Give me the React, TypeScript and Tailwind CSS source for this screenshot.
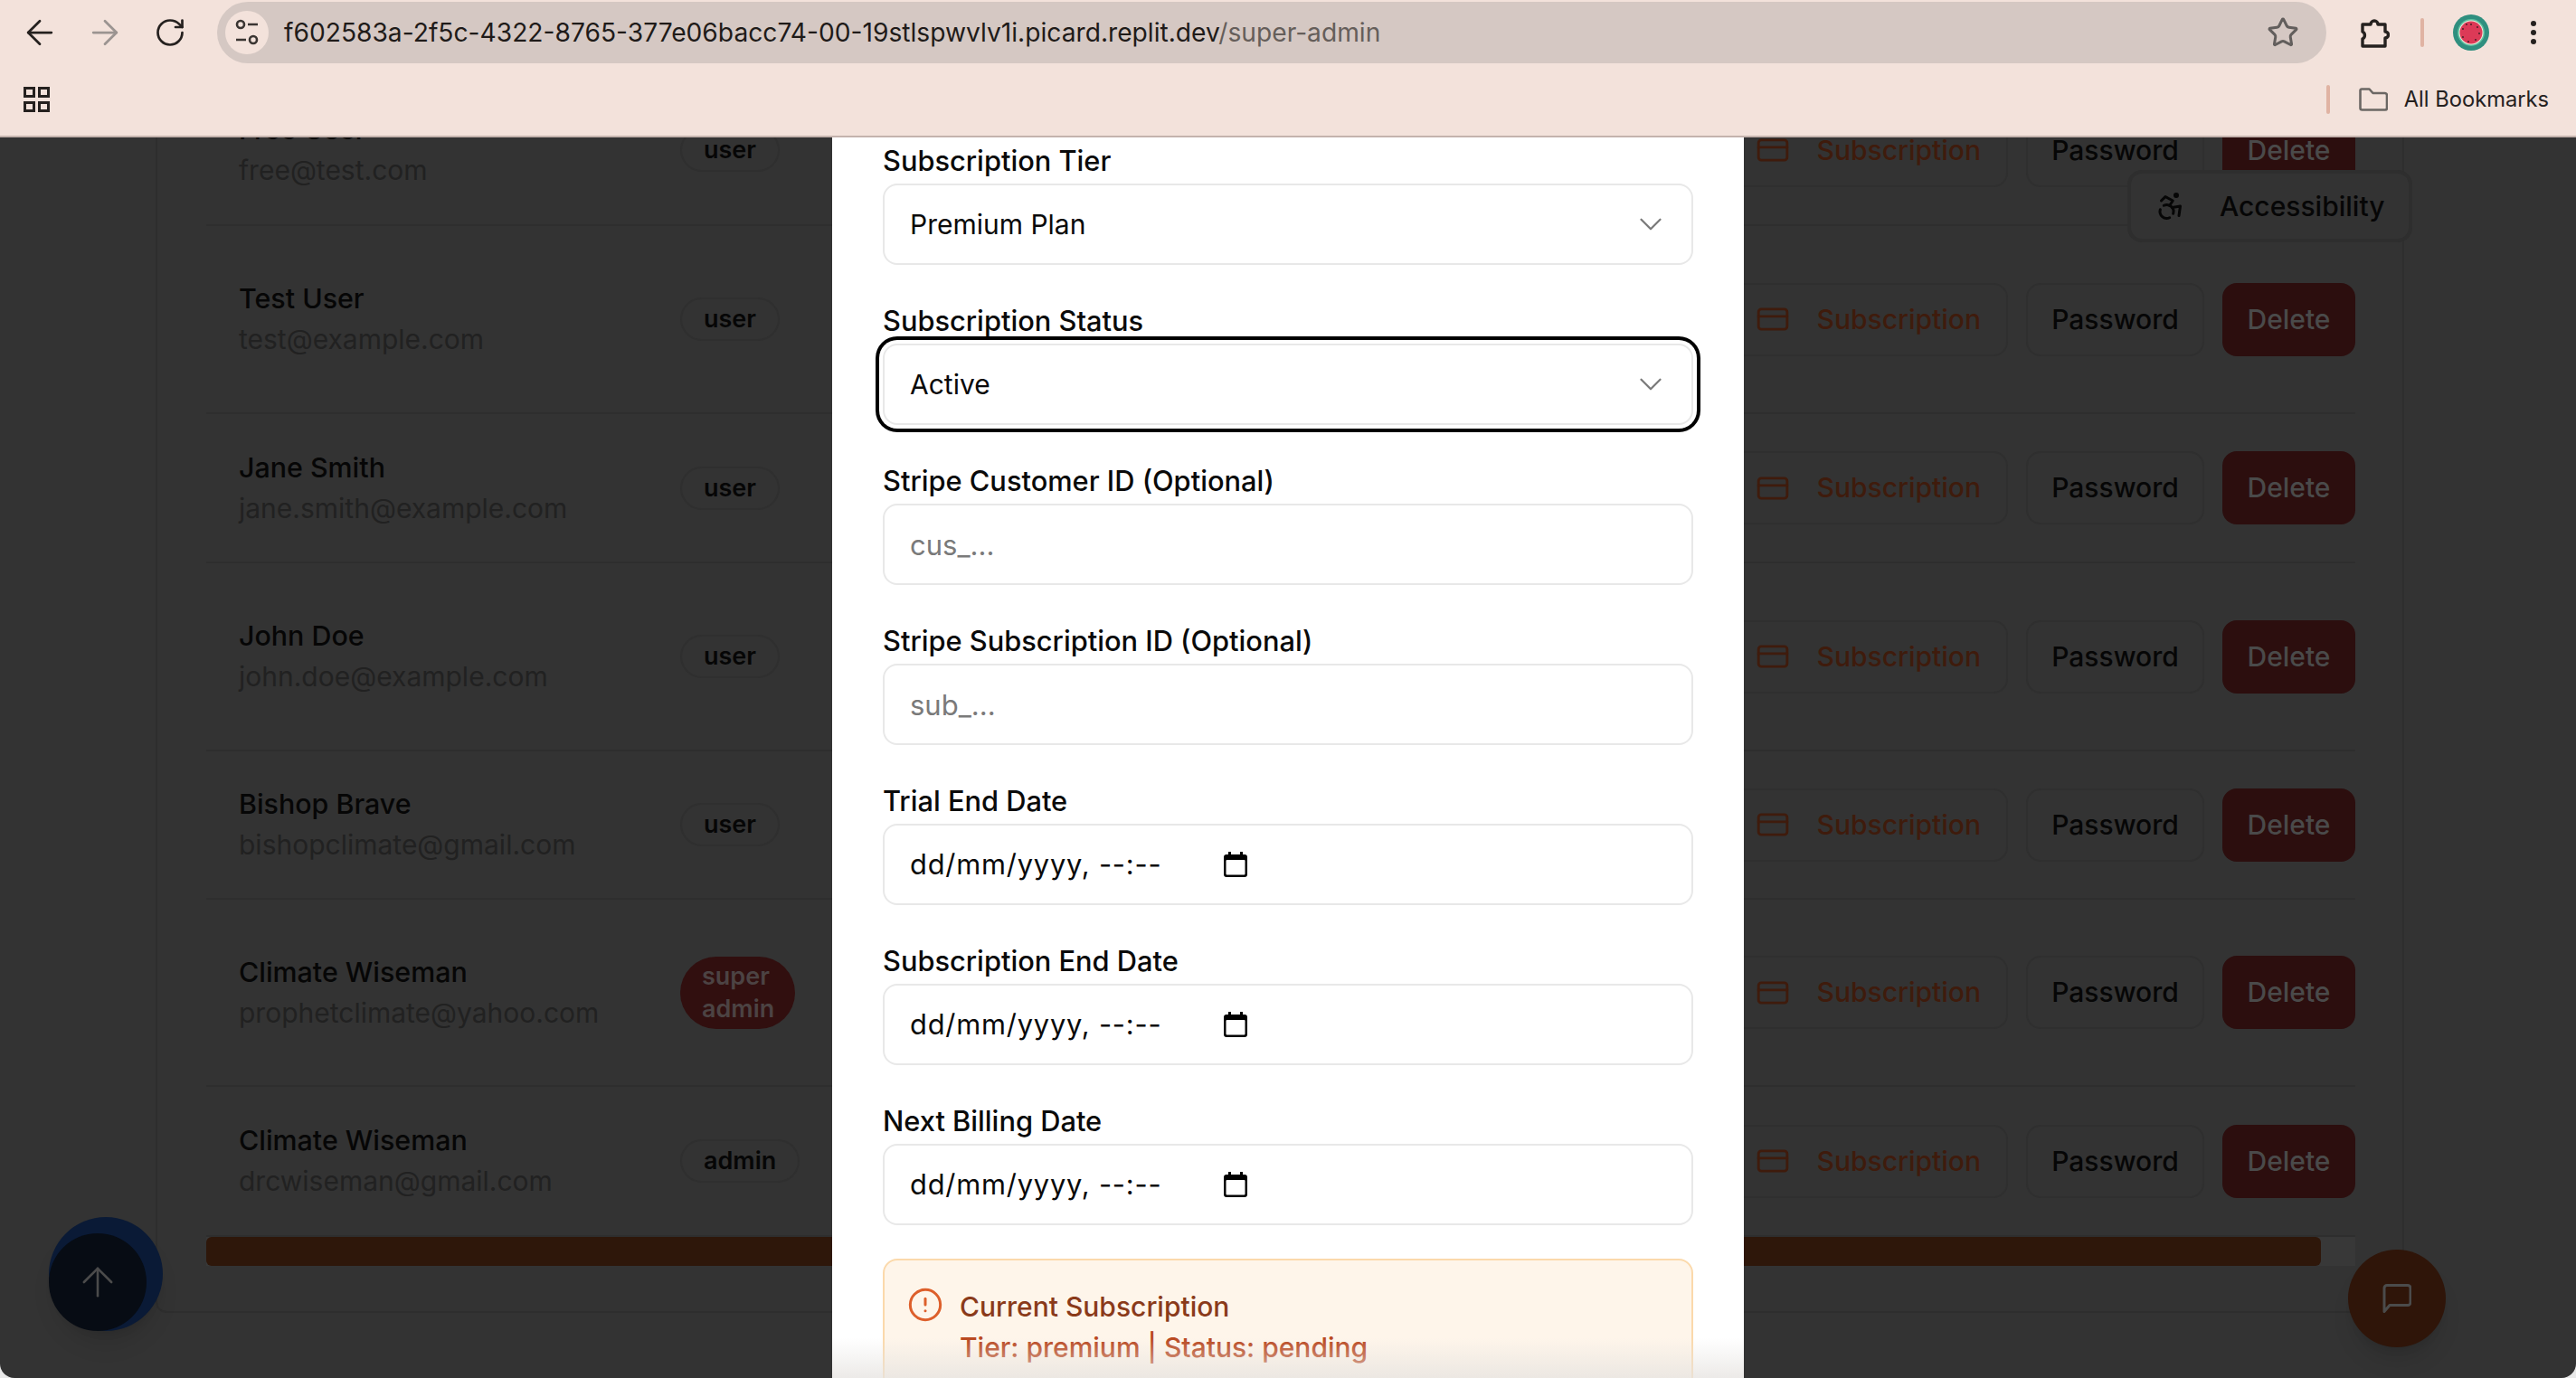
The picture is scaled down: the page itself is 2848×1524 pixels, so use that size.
import { Accessibility, ArrowLeft, ArrowRight, ArrowUp, ChevronDown, CircleAlert, CreditCard, RotateCw, Star } from 'lucide-react'

const users = [
  { name: 'Free User', email: 'free@test.com', role: 'user', height: 'h-[166px]' },
  { name: 'Test User', email: 'test@example.com', role: 'user', height: 'h-[208px]' },
  { name: 'Jane Smith', email: 'jane.smith@example.com', role: 'user', height: 'h-[165px]' },
  { name: 'John Doe', email: 'john.doe@example.com', role: 'user', height: 'h-[208px]' },
  { name: 'Bishop Brave', email: 'bishopclimate@gmail.com', role: 'user', height: 'h-[164px]' },
  { name: 'Climate Wiseman', email: 'prophetclimate@yahoo.com', role: 'super admin', height: 'h-[207px]' },
  { name: 'Climate Wiseman', email: 'drcwiseman@gmail.com', role: 'admin', height: 'h-[166px]' },
]

function TuneIcon() {
  return (
    <svg width="28" height="32" viewBox="0 0 28 32" fill="none" stroke="#3a3532" strokeWidth="2.6">
      <circle cx="7" cy="7" r="4" />
      <path d="M15 7h11M2 24h11" />
      <circle cx="21" cy="24" r="4" />
    </svg>
  )
}

function ExtensionIcon() {
  return (
    <svg width="32" height="34" viewBox="0 0 32 34" fill="none" stroke="#25211f" strokeWidth="3.4" strokeLinejoin="round">
      <path d="M2 8h9a4 4 0 0 1 8 0h8v8a3.5 3.5 0 0 1 0 7v9H2v-8a4.5 4.5 0 0 0 0-8z" />
    </svg>
  )
}

function AppsIcon() {
  return (
    <svg width="29" height="28" viewBox="0 0 29 28" fill="none" stroke="#25211f" strokeWidth="3">
      <rect x="1.5" y="1.5" width="10" height="9" />
      <rect x="17.5" y="1.5" width="10" height="9" />
      <rect x="1.5" y="17.5" width="10" height="9" />
      <rect x="17.5" y="17.5" width="10" height="9" />
    </svg>
  )
}

function FolderIcon() {
  return (
    <svg width="32" height="26" viewBox="0 0 32 26" fill="none" stroke="#6b6764" strokeWidth="2.6" strokeLinejoin="round">
      <path d="M1.5 3a1.5 1.5 0 0 1 1.5-1.500h8.500l4 4.500h13a2.500 2.500 0 0 1 2.500 2.500v14a2 2 0 0 1-2 2H3.500a2 2 0 0 1-2-2z" />
    </svg>
  )
}

function Avatar() {
  return (
    <svg width="40" height="40" viewBox="0 0 40 40">
      <circle cx="20" cy="20" r="20" fill="#2f8f7f" />
      <circle cx="20" cy="20" r="15" fill="#5cc0a0" />
      <circle cx="20" cy="20" r="13.500" fill="#f2e9dc" />
      <circle cx="20" cy="20" r="12.500" fill="#dc3a57" />
      {[[20, 11], [27, 14], [29, 21], [25, 28], [17, 30], [11, 25], [11, 16], [15, 11]].map(([cx, cy]) => (
        <circle key={`${cx}-${cy}`} cx={cx} cy={cy} r="0.9" fill="#3b1a20" />
      ))}
    </svg>
  )
}

function CalendarIcon() {
  return (
    <svg width="26" height="28" viewBox="0 0 26 28">
      <path d="M5 0h3v3h10V0h3v3h2a3 3 0 0 1 3 3v19a3 3 0 0 1-3 3H3a3 3 0 0 1-3-3V6a3 3 0 0 1 3-3h2z" fill="#000" />
      <rect x="2.500" y="9" width="21" height="16.500" rx="1" fill="#fff" />
    </svg>
  )
}

function ChatIcon() {
  return (
    <svg width="32" height="32" viewBox="0 0 32 32" fill="none" stroke="#4b4b4b" strokeWidth="3" strokeLinejoin="round">
      <path d="M2 4.500a3 3 0 0 1 3-3h23a3 3 0 0 1 3 3v16a3 3 0 0 1-3 3H8l-6 7z" />
    </svg>
  )
}

function UserRow({ user }: { user: (typeof users)[number] }) {
  return (
    <div className={`flex ${user.height} items-center border-b-2 border-[#2e2e2e] pl-9 last:border-b-0`}>
      <div className="w-[488px] text-[30px]">
        <p className="text-[30.4px] font-medium leading-[45px] text-[#060606]">{user.name}</p>
        <p className="leading-[45px] text-[#212121]">{user.email}</p>
      </div>
      <span
        className={
          user.role === 'super admin'
            ? 'w-[127px] rounded-[42px] bg-[#310f0f] px-6 py-1 text-[27px] font-semibold leading-9 text-[#4c4343]'
            : 'rounded-full border-2 border-[#2f2f2f] px-6 text-[27px] font-semibold leading-[44px] text-[#060606]'
        }
      >
        {user.role}
      </span>
      <div className="ml-auto flex items-center gap-5 text-[30px] font-medium">
        <button type="button" className="flex h-[81px] w-[310px] items-center justify-end gap-[30px] rounded-2xl border-2 border-[#2f2f2f] pr-[28px] text-[#3f1b0c]">
          <CreditCard size={38} strokeWidth={1.8} />
          Subscription
        </button>
        <button type="button" className="h-[81px] w-[197px] rounded-2xl border-2 border-[#2f2f2f] text-[#060606]">
          Password
        </button>
        <button type="button" className="h-[81px] w-[147px] rounded-2xl bg-[#2c0e0e] text-[#4a4a4a]">
          Delete
        </button>
      </div>
    </div>
  )
}

function Field({ label, children }: { label: string; children: React.ReactNode }) {
  return (
    <div>
      <label className="block text-[30.8px] font-medium leading-[34px] text-[#0a0a0a]">{label}</label>
      <div className="mt-2">{children}</div>
    </div>
  )
}

function SelectBox({ value, focused }: { value: string; focused?: boolean }) {
  return (
    <button
      type="button"
      className={`flex h-[90px] w-full items-center justify-between rounded-2xl border-2 border-[#e8e8e8] bg-white pl-[28px] pr-[24px] text-[30px] text-[#0a0a0a] ${
        focused ? 'ring-4 ring-black ring-offset-4 ring-offset-white' : ''
      }`}
    >
      {value}
      <ChevronDown size={42} strokeWidth={1.3} className="text-[#7a7a7a]" />
    </button>
  )
}

function DateBox() {
  return (
    <div className="flex h-[90px] items-center rounded-2xl border-2 border-[#e8e8e8] bg-white pl-[28px] text-[30.8px] tracking-[0.8px] text-[#0a0a0a]">
      <span className="w-[347px]">dd/mm/yyyy, --:--</span>
      <CalendarIcon />
    </div>
  )
}

export default function App() {
  return (
    <div className="h-[1524px] w-[2848px] overflow-hidden bg-[#e9e9e9] [font-family:Inter,sans-serif]">
      <header className="h-[152px] border-b-2 border-[#c4b3ad] bg-[#f3e2db]">
        <div className="flex h-[76px] items-start pt-0.5">
          <div className="flex h-[68px] w-[240px] items-center text-[#25211f]">
            <ArrowLeft size={44} strokeWidth={1.5} className="ml-[22px]" />
            <ArrowRight size={44} strokeWidth={1.5} className="ml-[28px] text-[#9b9491]" />
            <RotateCw size={36} strokeWidth={1.8} className="ml-[32px]" />
          </div>
          <div className="flex h-[68px] w-[2332px] items-center rounded-full bg-[#d5c8c3] pl-[9px] pr-[30px]">
            <span className="flex size-12 items-center justify-center rounded-full bg-[#f3e2db]">
              <TuneIcon />
            </span>
            <p className="ml-[17px] text-[28.2px] text-[#1f1b19]">
              f602583a-2f5c-4322-8765-377e06bacc74-00-19stlspwvlv1i.picard.replit.dev
              <span className="text-[#655e5a]">/super-admin</span>
            </p>
            <Star size={36} strokeWidth={2} className="ml-auto text-[#625e5c]" />
          </div>
          <div className="flex h-[68px] flex-1 items-center">
            <span className="ml-[38px]">
              <ExtensionIcon />
            </span>
            <span className="ml-[34px] h-8 w-1 rounded bg-[#e0b3a3]" />
            <span className="ml-8">
              <Avatar />
            </span>
            <span className="ml-[46px] flex flex-col gap-1">
              <i className="size-1.5 rounded-full bg-[#25211f]" />
              <i className="size-1.5 rounded-full bg-[#25211f]" />
              <i className="size-1.5 rounded-full bg-[#25211f]" />
            </span>
          </div>
        </div>
        <div className="flex h-[74px] items-center pb-[6px] pl-[26px]">
          <AppsIcon />
          <span className="ml-auto h-8 w-1 rounded bg-[#e0b3a3]" />
          <span className="ml-8">
            <FolderIcon />
          </span>
          <span className="ml-[18px] mr-[30px] text-[23.7px] text-[#25211f]">All Bookmarks</span>
        </div>
      </header>

      <main className="relative h-[1372px] overflow-hidden rounded-b-[16px] bg-[#333333]">
        <div className="-mt-[70px] ml-[172px] h-[1370px] w-[2486px] rounded-xl border-2 border-[#2e2e2e] pl-[54px] pr-[52px]">
          {users.map((user) => (
            <UserRow key={user.email} user={user} />
          ))}
          <div className="h-8 bg-[#383838]">
            <div className="h-full w-[2338px] rounded-md bg-[#2e170a]" />
          </div>
        </div>

        <div className="absolute left-[2352px] top-[36px] flex h-20 w-[315px] items-center rounded-2xl border-4 border-[#2e2e2e] bg-[#333333] text-[30px] font-medium text-[#060606]">
          <Accessibility size={36} strokeWidth={2} className="ml-[26px]" />
          <span className="ml-[36px]">Accessibility</span>
        </div>

        <div className="absolute left-[54px] top-[1194px] size-[126px] rounded-full bg-[#0a1a36] shadow-xl" />
        <button type="button" className="absolute left-[54px] top-[1212px] flex size-[108px] items-center justify-center rounded-full bg-[#070c14] text-[#4b4b4b]">
          <ArrowUp size={52} strokeWidth={1.2} />
        </button>
        <button type="button" className="absolute left-[2596px] top-[1230px] flex size-[108px] items-center justify-center rounded-full bg-[#2f1509] shadow-xl">
          <ChatIcon />
        </button>

        <section className="absolute inset-y-0 left-[920px] w-[1008px] overflow-hidden bg-white px-14 pt-[9px]">
          <div className="flex flex-col gap-[45px]">
            <Field label="Subscription Tier">
              <SelectBox value="Premium Plan" />
            </Field>
            <Field label="Subscription Status">
              <SelectBox value="Active" focused />
            </Field>
            <Field label="Stripe Customer ID (Optional)">
              <input
                placeholder="cus_..."
                className="h-[90px] w-full rounded-2xl border-2 border-[#e8e8e8] pl-[28px] text-[31px] placeholder:text-[#7a7a7a]"
              />
            </Field>
            <Field label="Stripe Subscription ID (Optional)">
              <input
                placeholder="sub_..."
                className="h-[90px] w-full rounded-2xl border-2 border-[#e8e8e8] pl-[28px] text-[31px] placeholder:text-[#7a7a7a]"
              />
            </Field>
            <Field label="Trial End Date">
              <DateBox />
            </Field>
            <Field label="Subscription End Date">
              <DateBox />
            </Field>
            <Field label="Next Billing Date">
              <DateBox />
            </Field>
          </div>
          <div className="mt-[37px] flex h-[200px] gap-[18px] rounded-2xl border-2 border-[#fbd9ab] bg-[#fef5ea] px-[28px] pt-[29px]">
            <CircleAlert size={40} strokeWidth={1.8} className="-ml-[3px] text-[#dd5f2b]" />
            <div className="text-[30px] leading-[45px]">
              <p className="font-medium text-[#8a3a1a]">Current Subscription</p>
              <p className="font-medium text-[#b9481f]">Tier: premium | Status: pending</p>
            </div>
          </div>
          <div className="absolute inset-x-0 bottom-0 h-11 bg-gradient-to-b from-white/0 to-[#e6e3e0]/75" />
        </section>
      </main>
    </div>
  )
}
